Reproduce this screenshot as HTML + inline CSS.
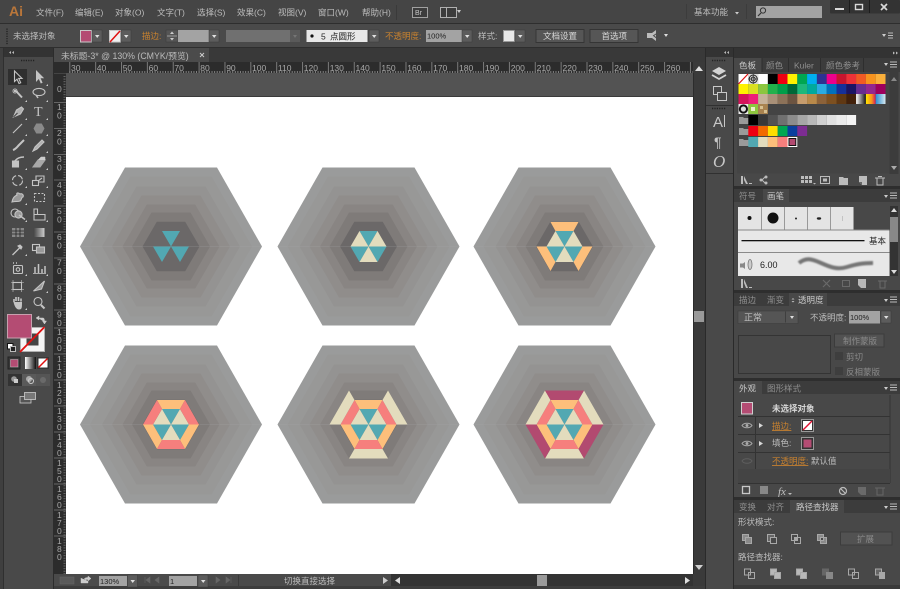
<!DOCTYPE html>
<html><head><meta charset="utf-8"><title>Ai</title>
<style>
html,body{margin:0;padding:0;background:#3a3a3a;width:900px;height:589px;overflow:hidden}
svg{display:block;filter:blur(.35px)}
text{font-family:"Liberation Sans","Noto Sans CJK SC",sans-serif;font-size:8.5px;fill:#bdbdbd}
.o{fill:#c9822f}.d{fill:#8a8a8a}.w{fill:#d8d8d8}.t{fill:#8f8f8f}.r{font-size:8.5px;fill:#a8a8a8}
</style></head><body>
<svg width="900" height="589" viewBox="0 0 900 589" xmlns="http://www.w3.org/2000/svg">
<defs>
<g id="dd"><rect width="10" height="12" fill="#5c5c5c" stroke="#3a3a3a" stroke-width=".5"/><polygon points="3,5 7.5,5 5.2,8" fill="#e0e0e0"/></g>
<g id="bg">
<polygon fill="#9a9b9b" points="-91,0 -46,-79 46,-79 91,0 46,79 -46,79"/>
<polygon fill="#989897" points="-81,0 -40.5,-70 40.5,-70 81,0 40.5,70 -40.5,70"/>
<polygon fill="#949392" points="-69,0 -34.5,-60 34.5,-60 69,0 34.5,60 -34.5,60"/>
<polygon fill="#908d8b" points="-59,0 -29.5,-51 29.5,-51 59,0 29.5,51 -29.5,51"/>
<polygon fill="#898583" points="-48.5,0 -24.2,-42 24.2,-42 48.5,0 24.2,42 -24.2,42"/>
<polygon fill="#7f7b79" points="-39,0 -19.5,-34 19.5,-34 39,0 19.5,34 -19.5,34"/>
<polygon fill="#6b6868" points="-28.5,0 -14.2,-24.7 14.2,-24.7 28.5,0 14.2,24.7 -14.2,24.7"/>
<line x1="-91" x2="91" y1="0" y2="0" stroke="#a9a9a9" stroke-width=".6" opacity=".4"/>
</g>
<g id="teal" fill="#52a8b2"><polygon points="-9,-15.5 9,-15.5 0,0"/><polygon points="-18,0 0,0 -9,15.5"/><polygon points="0,0 18,0 9,15.5"/></g>
<g id="cream" fill="#e3dcbd"><polygon points="-9,-15.5 0,0 -18,0"/><polygon points="9,-15.5 18,0 0,0"/><polygon points="-9,15.5 0,0 9,15.5"/></g>
<g id="orange" fill="#fdbf7b"><polygon points="-14,-24.5 14,-24.5 9,-15.5 -9,-15.5"/><polygon points="-28,0 -18,0 -9,15.5 -14,24.5"/><polygon points="28,0 18,0 9,15.5 14,24.5"/></g>
<g id="pink" fill="#f67f7d"><polygon points="-14,-24.5 -9,-15.5 -18,0 -28,0"/><polygon points="14,-24.5 9,-15.5 18,0 28,0"/><polygon points="-9,15.5 9,15.5 14,24.5 -14,24.5"/></g>
<g id="cream3" fill="#e3dcbd"><polygon points="-19.5,-34 -14,-24.5 -28,0 -39,0"/><polygon points="19.5,-34 14,-24.5 28,0 39,0"/><polygon points="-14,24.5 14,24.5 19.5,34 -19.5,34"/></g>
<g id="mag" fill="#b24a70"><polygon points="-19.5,-34 19.5,-34 14,-24.5 -14,-24.5"/><polygon points="-39,0 -28,0 -14,24.5 -19.5,34"/><polygon points="39,0 28,0 14,24.5 19.5,34"/></g>
<g id="folder"><path d="M0 1h4l1 1h5v6H0z" fill="#9a9a9a"/></g>
<linearGradient id="gg"><stop offset="0" stop-color="#fff"/><stop offset="1" stop-color="#111"/></linearGradient>
<linearGradient id="gy"><stop offset="0" stop-color="#ffe600"/><stop offset=".6" stop-color="#f7931e"/><stop offset="1" stop-color="#d4145a"/></linearGradient>
<linearGradient id="gb"><stop offset="0" stop-color="#2a8fd0"/><stop offset="1" stop-color="#d8e8f0"/></linearGradient>
<linearGradient id="gt" x1="0" x2="1"><stop offset="0" stop-color="#444"/><stop offset="1" stop-color="#ccc"/></linearGradient>
</defs>

<!-- base -->
<rect width="900" height="589" fill="#3d3d3d"/>
<!-- menu -->
<rect width="900" height="23" fill="#454545"/>
<rect y="23" width="900" height="1" fill="#2e2e2e"/>
<rect y="24" width="900" height="23" fill="#4a4a4a"/>
<rect y="47" width="900" height="1" fill="#2e2e2e"/>
<text x="9" y="16" style="font-size:14px;font-weight:bold;fill:#b9763a">Ai</text>
<text x="36" y="15.5">文件(F)</text><text x="75" y="15.5">编辑(E)</text><text x="115" y="15.5">对象(O)</text><text x="157" y="15.5">文字(T)</text><text x="197" y="15.5">选择(S)</text><text x="237" y="15.5">效果(C)</text><text x="278" y="15.5">视图(V)</text><text x="318" y="15.5">窗口(W)</text><text x="362" y="15.5">帮助(H)</text>
<rect x="396" y="5" width="1" height="15" fill="#3a3a3a"/>
<rect x="412.5" y="7.5" width="15" height="10" fill="#3c3c3c" stroke="#a0a0a0"/><text x="415" y="15" style="font-size:7px;fill:#c8c8c8">Br</text>
<rect x="440.5" y="7.5" width="16" height="10" fill="#3c3c3c" stroke="#b0b0b0"/><rect x="446" y="8" width="1" height="9" fill="#b0b0b0"/><polygon points="455,10 459,10 457,13" fill="#ccc" transform="translate(2,0)"/>
<text x="694" y="15">基本功能</text><polygon points="735,12 739,12 737,14.5" fill="#ccc"/>
<rect x="686" y="4" width="1" height="15" fill="#3c3c3c"/><rect x="746" y="4" width="1" height="15" fill="#3c3c3c"/>
<rect x="756" y="6" width="66" height="12" fill="#a3a3a3"/>
<circle cx="763" cy="10.5" r="2.6" fill="none" stroke="#333" stroke-width="1"/><line x1="761" y1="13" x2="758" y2="16" stroke="#333" stroke-width="1.2"/>
<rect x="830" y="0" width="70" height="13.5" fill="#333" rx="1"/>
<rect x="849" y="0" width="1" height="13" fill="#1c1c1c"/><rect x="869" y="0" width="1" height="13" fill="#1c1c1c"/>
<rect x="835" y="8" width="9" height="2" fill="#d8d8d8"/>
<rect x="855.5" y="4.5" width="7" height="5" fill="none" stroke="#d8d8d8" stroke-width="1.4"/>
<path d="M881 4l6 6M887 4l-6 6" stroke="#d8d8d8" stroke-width="1.7"/>

<!-- control bar -->
<path d="M7 28.5v16" stroke="#222" stroke-width="1.4" stroke-dasharray="1.2 1.2"/>
<text x="13" y="39">未选择对象</text>
<rect x="80.5" y="30.5" width="11" height="11.5" fill="#b44c73" stroke="#c9c9c9"/><use href="#dd" x="92" y="30"/>
<rect x="109.5" y="30.5" width="11" height="11.5" fill="#f0f0f0" stroke="#c9c9c9"/><line x1="110" y1="42" x2="120" y2="31" stroke="#e01010" stroke-width="1.5"/><use href="#dd" x="121" y="30"/>
<text x="142" y="39" class="o">描边:</text>
<rect x="166" y="30" width="12" height="12" fill="#555" stroke="#3a3a3a" stroke-width=".5"/><polygon points="170,34 174,34 172,31.5" fill="#ccc"/><polygon points="170,38 174,38 172,40.5" fill="#ccc"/><rect x="167" y="35.5" width="10" height="1" fill="#9a9a9a"/>
<rect x="178" y="30" width="31" height="12" fill="#a3a3a3"/><use href="#dd" x="209" y="30" />
<rect x="226" y="30" width="64" height="12" fill="#707070"/><rect x="290" y="30" width="10" height="12" fill="#5a5a5a"/><polygon points="293,35 297,35 295,38" fill="#757575"/>
<rect x="306.5" y="30" width="61" height="12" fill="#e8e8e8"/><circle cx="312" cy="36" r="1.6" fill="#111"/><text x="321" y="39.5" style="fill:#222">5</text><text x="330" y="39.5" style="fill:#222">点圆形</text><use href="#dd" x="369" y="30"/>
<text x="385" y="39" class="o">不透明度:</text>
<rect x="426" y="30" width="36" height="12" fill="#a3a3a3"/><text x="427" y="38.5" style="font-size:7.5px;fill:#222">100%</text><use href="#dd" x="462" y="30"/>
<text x="478" y="39">样式:</text>
<rect x="503.5" y="30.5" width="11" height="11" fill="#e8e8e8" stroke="#9a9a9a"/><use href="#dd" x="515" y="30"/>
<rect x="536" y="29.5" width="48" height="13" fill="#565656" stroke="#353535"/><text x="543" y="39" class="w">文档设置</text>
<rect x="590" y="29.5" width="48" height="13" fill="#565656" stroke="#353535"/><text x="601.500" y="39" class="w">首选项</text>
<path d="M647 33h5l4-3v11l-4-3h-5z" fill="#bbb"/><path d="M653 36l6-4M654 36l5 4" stroke="#4a4a4a" stroke-width="1"/><polygon points="664,34 668,34 666,37" fill="#ddd"/>
<polygon points="882,34 886,34 884,37" fill="#ccc"/><path d="M888 33h5M888 35.5h5M888 38h5" stroke="#bbb"/>

<!-- doc tab row -->
<rect x="54" y="48" width="652" height="14" fill="#393939"/>
<rect x="54" y="48" width="155" height="14" fill="#4b4b4b"/>
<text x="61" y="59" style="font-size:8.8px;fill:#bbb">未标题-3* @ 130% (CMYK/预览)</text>
<path d="M200 53l4 4M204 53l-4 4" stroke="#ccc" stroke-width="1"/>

<!-- pasteboard + canvas -->
<rect x="66" y="73" width="627" height="24" fill="#535353"/>
<rect x="66" y="97" width="627" height="477" fill="#fff"/>
<rect x="66" y="96" width="627" height="1" fill="#3a3a3a"/>

<!-- rulers -->
<rect x="54" y="62" width="639" height="11" fill="#2c2c2c"/>
<rect x="54" y="62" width="12" height="524" fill="#2c2c2c"/>
<line x1="69.3" x2="693" y1="67.5" y2="67.5" stroke="#7a7a7a" stroke-width="11" stroke-dasharray="1 24.86"/>
<line x1="69.3" x2="693" y1="72" y2="72" stroke="#808080" stroke-width="2" stroke-dasharray="1 1.586"/>
<g>
<text class="r" x="71" y="71">30</text><text class="r" x="96.8" y="71">40</text><text class="r" x="122.7" y="71">50</text><text class="r" x="148.6" y="71">60</text><text class="r" x="174.4" y="71">70</text><text class="r" x="200.3" y="71">80</text><text class="r" x="226.2" y="71">90</text><text class="r" x="252" y="71">100</text><text class="r" x="277.9" y="71">110</text><text class="r" x="303.8" y="71">120</text><text class="r" x="329.7" y="71">130</text><text class="r" x="355.5" y="71">140</text><text class="r" x="381.4" y="71">150</text><text class="r" x="407.3" y="71">160</text><text class="r" x="433.1" y="71">170</text><text class="r" x="459" y="71">180</text><text class="r" x="484.9" y="71">190</text><text class="r" x="510.7" y="71">200</text><text class="r" x="536.6" y="71">210</text><text class="r" x="562.5" y="71">220</text><text class="r" x="588.3" y="71">230</text><text class="r" x="614.2" y="71">240</text><text class="r" x="640.1" y="71">250</text><text class="r" x="666" y="71">260</text>
</g>
<path d="M54 102.5h12M54 128.5h12M54 154.5h12M54 180h12M54 206h12M54 232h12M54 258h12M54 284h12M54 310h12M54 328h12M54 354h12M54 380h12M54 406h12M54 432h12M54 458h12M54 484h12M54 510h12M54 536h12" stroke="#666"/>
<line x1="64.5" x2="64.5" y1="76" y2="574" stroke="#666" stroke-width="2" stroke-dasharray="1 1.59"/>
<rect x="54" y="73" width="12" height="1" fill="#444"/>
<text class="r" x="57" y="92">0</text>
<text class="r"><tspan x="57" y="110">1</tspan><tspan x="57" y="118.5">0</tspan></text>
<text class="r"><tspan x="57" y="136">2</tspan><tspan x="57" y="144.5">0</tspan></text>
<text class="r"><tspan x="57" y="162">3</tspan><tspan x="57" y="170.5">0</tspan></text>
<text class="r"><tspan x="57" y="188">4</tspan><tspan x="57" y="196.5">0</tspan></text>
<text class="r"><tspan x="57" y="214">5</tspan><tspan x="57" y="222.5">0</tspan></text>
<text class="r"><tspan x="57" y="240">6</tspan><tspan x="57" y="248.5">0</tspan></text>
<text class="r"><tspan x="57" y="265.5">7</tspan><tspan x="57" y="274">0</tspan></text>
<text class="r"><tspan x="57" y="291.5">8</tspan><tspan x="57" y="300">0</tspan></text>
<text class="r"><tspan x="57" y="317.5">9</tspan><tspan x="57" y="326">0</tspan></text>
<text class="r"><tspan x="57" y="335">1</tspan><tspan x="57" y="343">0</tspan><tspan x="57" y="351">0</tspan></text>
<text class="r"><tspan x="57" y="362">1</tspan><tspan x="57" y="370">1</tspan><tspan x="57" y="378">0</tspan></text>
<text class="r"><tspan x="57" y="388">1</tspan><tspan x="57" y="396">2</tspan><tspan x="57" y="404">0</tspan></text>
<text class="r"><tspan x="57" y="414">1</tspan><tspan x="57" y="422">3</tspan><tspan x="57" y="430">0</tspan></text>
<text class="r"><tspan x="57" y="440">1</tspan><tspan x="57" y="448">4</tspan><tspan x="57" y="456">0</tspan></text>
<text class="r"><tspan x="57" y="466">1</tspan><tspan x="57" y="474">5</tspan><tspan x="57" y="482">0</tspan></text>
<text class="r"><tspan x="57" y="492">1</tspan><tspan x="57" y="500">6</tspan><tspan x="57" y="508">0</tspan></text>
<text class="r"><tspan x="57" y="518">1</tspan><tspan x="57" y="526">7</tspan><tspan x="57" y="534">0</tspan></text>
<text class="r"><tspan x="57" y="544">1</tspan><tspan x="57" y="552">8</tspan><tspan x="57" y="560">0</tspan></text>

<!-- artwork -->
<g transform="translate(171,246.5)"><use href="#bg"/><use href="#teal"/></g>
<g transform="translate(368.5,246.5)"><use href="#bg"/><use href="#teal"/><use href="#cream"/></g>
<g transform="translate(564.5,246.5)"><use href="#bg"/><use href="#teal"/><use href="#cream"/><use href="#orange"/></g>
<g transform="translate(171,424.5)"><use href="#bg"/><use href="#teal"/><use href="#cream"/><use href="#orange"/><use href="#pink"/></g>
<g transform="translate(368.5,424.5)"><use href="#bg"/><use href="#teal"/><use href="#cream"/><use href="#orange"/><use href="#pink"/><use href="#cream3"/></g>
<g transform="translate(564.5,424.5)"><use href="#bg"/><use href="#teal"/><use href="#cream"/><use href="#orange"/><use href="#pink"/><use href="#cream3"/><use href="#mag"/></g>

<!-- canvas right scrollbar -->
<rect x="693" y="62" width="12" height="524" fill="#3a3a3a"/>
<polygon points="695,71 703,71 699,66" fill="#e0e0e0"/>
<rect x="694" y="311" width="10" height="11" fill="#9a9a9a"/>
<polygon points="695,565 703,565 699,570" fill="#d0d0d0"/>
<rect x="693" y="73" width="1" height="501" fill="#2c2c2c"/>

<!-- status bar -->
<rect x="54" y="574" width="337" height="12" fill="#4a4a4a"/>
<rect x="391" y="574" width="302" height="12" fill="#333"/>
<rect x="54" y="586" width="652" height="3" fill="#3d3d3d"/>
<rect x="60" y="577" width="14" height="7" fill="#5a5a5a" stroke="#666" stroke-width=".5"/>
<path d="M81 578v5h7v-2M84 580c0-2 2-2.5 4-2.5v-1.5l3 2.5-3 2.5v-1.5c-2 0-3 0-4 1z" fill="#ccc" stroke="#ccc" stroke-width=".4"/>
<rect x="99" y="576" width="28" height="10" fill="#a3a3a3"/><text x="100" y="584" style="font-size:7.5px;fill:#222">130%</text><use href="#dd" x="127.5" y="575"/>
<path d="M145 577v6M150 577l-4 3 4 3zM159 577l-4 3 4 3z" fill="#666" stroke="#666" stroke-width=".6"/>
<rect x="169" y="576" width="28" height="10" fill="#a3a3a3"/><text x="170" y="584" style="font-size:7.5px;fill:#222">1</text><use href="#dd" x="198" y="575"/>
<path d="M216 577l4 3-4 3zM226 577l4 3-4 3zM231 577v6" fill="#666" stroke="#666" stroke-width=".6"/>
<rect x="238" y="575" width="1" height="11" fill="#3a3a3a"/>
<text x="284" y="584">切换直接选择</text>
<polygon points="383,577 383,584 388,580.5" fill="#ccc"/>
<polygon points="400,577 400,584 395,580.5" fill="#ddd"/>
<rect x="537" y="575" width="10" height="11" fill="#9a9a9a"/>
<polygon points="685,577 685,584 690,580.5" fill="#ddd"/>

<!-- left toolbar -->
<rect x="0" y="48" width="54" height="541" fill="#494949"/>
<rect x="0" y="48" width="3" height="541" fill="#3f3f3f"/>
<rect x="3" y="48" width="1" height="541" fill="#2f2f2f"/>
<rect x="4" y="48" width="50" height="9" fill="#333"/>
<rect x="53" y="48" width="1" height="541" fill="#2c2c2c"/>
<path d="M9 52.5l2-1.5v3zM12 52.5l2-1.5v3z" fill="#bbb"/>
<path d="M21 60.5h14" stroke="#222" stroke-width="1.4" stroke-dasharray="1.2 1.2"/>
<rect x="8" y="69" width="19" height="16" fill="#2f2f2f"/>
<!-- tools -->
<g fill="none" stroke="#c4c4c4" stroke-width="1.1">
<path d="M14.5 71v10.5l2.5-2.3 2 4.3 1.700-.8-2-4.300h3.300z"/>
<path d="M15.500 90.500l6.500 7" stroke-width="2"/>
<path d="M12 91h6M15 88v6M13 89l4 4M17 89l-4 4" stroke-width=".8"/>
<ellipse cx="39" cy="92" rx="6" ry="3.600"/><path d="M36 95l2 3" stroke-width="1.500"/>
<path d="M13.500 117l3-7 5-3 2 2-3 5z" fill="#b0b0b0"/><path d="M13.500 117l4-4" stroke="#444"/>
<path d="M13 133l9-9"/>
<path d="M13 150c3-1 4-3 6-5l5-5" stroke-width="2"/>
<path d="M33 151l2-4 7-7 2 2-7 7z" fill="#b0b0b0"/>
<path d="M12.500 161h6v6h-6z" fill="#c4c4c4"/><path d="M15 161c2-3 5-4 9-4" stroke-width="1.600"/>
<path d="M33 167l5-7h7l-5 7z" fill="#a8a8a8" stroke="#a8a8a8"/><path d="M38 160l3-3h4v3" fill="#ccc" stroke="#ccc" stroke-width=".5"/>
<circle cx="17.500" cy="180.500" r="5" stroke-dasharray="6 2"/>
<rect x="32.500" y="180.500" width="6" height="5"/><path d="M36 180v-4h8v6h-5M38 181l4-3"/>
<path d="M12 202c1-5 3-6 5-7-1-2 1-3 3-1 2-1 4 1 3 3-2 0-1 3-3 4-2 1-4 0-8 1z" fill="#999"/>
<rect x="34.500" y="193.500" width="10" height="8" stroke-dasharray="2 1.500"/>
<circle cx="15" cy="213" r="4" /><circle cx="18.500" cy="214.500" r="3.600" fill="#999"/><path d="M19 215l6 4.500" stroke-width="1.500"/>
<path d="M34 220v-11h3.500v5.500h7.500v5.500zM34 214.500h11"/>
</g>
<text x="34" y="116" style="font-family:'Liberation Serif',serif;font-size:14px;fill:#c4c4c4">T</text>
<polygon points="44.500,128.500 41.750,133.500 36.250,133.500 33.500,128.500 36.250,123.500 41.750,123.500" fill="#8a8a8a"/>
<path d="M36 70v12l2.800-3 2 4.500 1.800-.8-2-4.500h3.600z" fill="#c4c4c4"/>
<rect x="12" y="228" width="12" height="9" fill="#888"/><path d="M12 231h12M12 234h12M16 228v9M20 228v9" stroke="#222" stroke-width=".8"/>
<rect x="33.500" y="228" width="11" height="9" fill="url(#gt)"/>
<!-- second half tools -->
<g fill="none" stroke="#c4c4c4" stroke-width="1.100">
<path d="M12.500 255l7-7" stroke-width="1.300"/><path d="M18 246l2-1 2 2-1 2z" fill="#c4c4c4"/>
<rect x="32.500" y="244.500" width="7" height="6"/><rect x="36.500" y="247" width="8" height="6" fill="#999"/>
<rect x="13.500" y="265.500" width="9" height="8" rx="1"/><circle cx="18" cy="269.500" r="1.800"/><path d="M13 263h1M16 263h1" stroke-width="1.500"/>
<path d="M35 273v-6M38.500 273v-9M42 273v-4M45 273v-7" stroke-width="1.500"/><path d="M33 273.500h13" stroke-width=".8"/>
<rect x="13" y="282.500" width="8.500" height="7"/><path d="M11 282.500h13M11 289.500h13M13 280v12M21.500 280v12" stroke-width=".6"/>
<path d="M33.500 291l11-10-3 8z" fill="#999"/>
<circle cx="38" cy="301.500" r="4"/><path d="M41 305l3.500 3.500" stroke-width="2"/>
</g>
<path d="M14 302v-3M16 301v-4M18.500 301v-4M21 301.500v-3" stroke="#c4c4c4" stroke-width="1.600"/><path d="M13.500 302c1 4 2.500 7.500 5.500 7.500s3-2 3-7.500z" fill="#c4c4c4"/>
<!-- tri markers -->
<path d="M46 86h2v-2zM25 102h2v-2zM46 102h2v-2zM25 120h2v-2zM46 120h2v-2zM25 136h2v-2zM46 136h2v-2zM46 153h2v-2zM25 170h2v-2zM46 170h2v-2zM25 188h2v-2zM46 188h2v-2zM25 205h2v-2zM25 222h2v-2zM46 222h2v-2zM25 256h2v-2zM25 276h2v-2zM46 276h2v-2zM46 293h2v-2zM25 310h2v-2z" fill="#ccc"/>
<!-- fill/stroke -->
<rect x="20.5" y="327.5" width="24" height="24" fill="#f4f4f4" stroke="#b0b0b0"/>
<rect x="26.5" y="333.5" width="12" height="12" fill="#444"/>
<line x1="20" y1="352" x2="44.500" y2="327" stroke="#e01010" stroke-width="1.800"/>
<rect x="7.500" y="314.500" width="24" height="23.500" fill="#b44c73" stroke="#c7a0ae"/>
<path d="M38 318h5c1 0 1.500 1 1.500 4M36 318l3-2v4zM44.500 324l-2-3h4z" fill="#ccc" stroke="#ccc" stroke-width=".5"/>
<rect x="7.500" y="343.500" width="5.500" height="5.500" fill="#fff" stroke="#111"/><rect x="10.500" y="346.500" width="5" height="5" fill="#222" stroke="#bbb"/>
<rect x="8" y="357" width="12" height="12" fill="#383838" stroke="#222"/><rect x="10.500" y="359.500" width="7.500" height="7.500" fill="#b44c73" stroke="#ddd" stroke-width=".4"/>
<rect x="25" y="357" width="11" height="12" fill="url(#gg)"/>
<rect x="37" y="357" width="12" height="12" fill="#383838"/><rect x="38.500" y="358.500" width="9" height="9" fill="#fff"/><line x1="38.500" y1="367.500" x2="47.500" y2="358.500" stroke="#e01010" stroke-width="1.500"/>
<rect x="8" y="374" width="14" height="12" fill="#333"/><rect x="22" y="374" width="14" height="12" fill="#5a5a5a"/><rect x="36" y="374" width="14" height="12" fill="#555"/>
<circle cx="14" cy="379" r="2.800" fill="#999"/><rect x="14" y="379" width="4" height="4" fill="#ccc"/>
<circle cx="29" cy="379" r="3" fill="#aaa"/><circle cx="31" cy="381" r="2.500" fill="none" stroke="#ccc"/>
<circle cx="43" cy="380" r="3" fill="#6a6a6a"/>
<rect x="20" y="396.500" width="11" height="6.500" fill="#555" stroke="#ccc" stroke-width=".8"/><rect x="24.500" y="392.500" width="11" height="7" fill="#777" stroke="#ccc" stroke-width=".8"/>

<!-- right icon strip -->
<rect x="705" y="48" width="29" height="541" fill="#494949"/>
<rect x="705" y="48" width="1" height="541" fill="#2a2a2a"/>
<rect x="733" y="48" width="1" height="541" fill="#2a2a2a"/>
<rect x="706" y="48" width="27" height="9" fill="#333"/>
<path d="M724 52.5l2-1.5v3zM727 52.5l2-1.5v3z" fill="#bbb"/>
<path d="M712 60.5h14" stroke="#222" stroke-width="1.4" stroke-dasharray="1.2 1.2"/>
<path d="M719 67l7 4-7 4-7-4z" fill="#d4d4d4"/><path d="M712 75l7 4 7-4" fill="none" stroke="#d4d4d4" stroke-width="1.8"/>
<rect x="713.5" y="86.5" width="8" height="8" fill="none" stroke="#c8c8c8"/><rect x="717.5" y="92.5" width="9" height="8" fill="#494949" stroke="#c8c8c8"/>
<rect x="706" y="105" width="27" height="1" fill="#303030"/>
<path d="M712 108.5h14" stroke="#222" stroke-width="1.4" stroke-dasharray="1.2 1.2"/>
<text x="713" y="127" style="font-size:15px;fill:#c8c8c8">A</text><rect x="724" y="115" width="1" height="12" fill="#c8c8c8"/>
<text x="714" y="147" style="font-size:14px;fill:#c8c8c8">¶</text>
<text x="713" y="167" style="font-family:'Liberation Serif',serif;font-style:italic;font-size:17px;fill:#c8c8c8">O</text>
<rect x="706" y="173" width="27" height="1" fill="#303030"/>

<!-- right panels -->
<rect x="734" y="48" width="166" height="541" fill="#484848"/>
<rect x="734" y="48" width="166" height="10" fill="#333"/>
<path d="M895 53l-2-1.5v3zM898 53l-2-1.5v3z" fill="#bbb"/>

<!-- swatches -->
<rect x="734" y="58" width="166" height="14" fill="#3c3c3c"/>
<rect x="734" y="58" width="28" height="14" fill="#484848"/>
<text x="739" y="68.5" style="fill:#c8c8c8">色板</text><text x="766" y="68.5" class="t">颜色</text><text x="794" y="68.5" class="t">Kuler</text><text x="826" y="68.5" class="t">颜色参考</text>
<rect x="761.5" y="58" width="1" height="14" fill="#2e2e2e"/><rect x="788" y="58" width="1" height="14" fill="#2e2e2e"/><rect x="820" y="58" width="1" height="14" fill="#2e2e2e"/><rect x="863" y="58" width="1" height="14" fill="#2e2e2e"/>
<polygon points="884,63 888,63 886,66" fill="#ccc"/><path d="M890 62h7M890 64.5h7M890 67h7" stroke="#bbb"/>
<rect x="737" y="72.5" width="152.5" height="101" fill="#444"/>
<rect x="889.5" y="72" width="9" height="102" fill="#3c3c3c"/>
<polygon points="891,81 897,81 894,77" fill="#888"/><polygon points="891,166 897,166 894,170" fill="#aaa"/>
<!-- rows -->
<g>
<rect x="738.5" y="74" width="9.8" height="10" fill="#fff"/><line x1="738.5" y1="84" x2="748" y2="74" stroke="#e01010" stroke-width="1.2"/>
<rect x="748.3" y="74" width="9.8" height="10" fill="#ddd"/><circle cx="753.2" cy="79" r="4" fill="none" stroke="#222"/><circle cx="753.2" cy="79" r="2" fill="none" stroke="#222"/><path d="M748 79h10M753.2 74v10" stroke="#222" stroke-width=".6"/>
<rect x="758.1" y="74" width="9.8" height="10" fill="#fff"/>
<rect x="767.9" y="74" width="9.8" height="10" fill="#000"/>
<rect x="777.7" y="74" width="9.8" height="10" fill="#ed0012"/>
<rect x="787.5" y="74" width="9.8" height="10" fill="#fff100"/>
<rect x="797.3" y="74" width="9.8" height="10" fill="#00a651"/>
<rect x="807.1" y="74" width="9.8" height="10" fill="#00aeef"/>
<rect x="816.9" y="74" width="9.8" height="10" fill="#2e3192"/>
<rect x="826.7" y="74" width="9.8" height="10" fill="#ec008c"/>
<rect x="836.5" y="74" width="9.8" height="10" fill="#c8142e"/>
<rect x="846.3" y="74" width="9.8" height="10" fill="#ed3237"/>
<rect x="856.1" y="74" width="9.8" height="10" fill="#f15a24"/>
<rect x="865.9" y="74" width="9.8" height="10" fill="#f7931e"/>
<rect x="875.7" y="74" width="9.8" height="10" fill="#fbb03b"/>

<rect x="738.5" y="84" width="9.8" height="10" fill="#fff200"/>
<rect x="748.3" y="84" width="9.8" height="10" fill="#d9e021"/>
<rect x="758.1" y="84" width="9.8" height="10" fill="#8cc63f"/>
<rect x="767.9" y="84" width="9.8" height="10" fill="#22b14c"/>
<rect x="777.7" y="84" width="9.8" height="10" fill="#009e49"/>
<rect x="787.5" y="84" width="9.8" height="10" fill="#006837"/>
<rect x="797.3" y="84" width="9.8" height="10" fill="#1db87a"/>
<rect x="807.1" y="84" width="9.8" height="10" fill="#00a99d"/>
<rect x="816.9" y="84" width="9.8" height="10" fill="#29abe2"/>
<rect x="826.7" y="84" width="9.8" height="10" fill="#0071bc"/>
<rect x="836.5" y="84" width="9.8" height="10" fill="#15309a"/>
<rect x="846.3" y="84" width="9.8" height="10" fill="#1b1464"/>
<rect x="856.1" y="84" width="9.8" height="10" fill="#662d91"/>
<rect x="865.9" y="84" width="9.8" height="10" fill="#93278f"/>
<rect x="875.7" y="84" width="9.8" height="10" fill="#9e005d"/>

<rect x="738.5" y="94" width="9.8" height="10" fill="#d4145a"/>
<rect x="748.3" y="94" width="9.8" height="10" fill="#ed1e79"/>
<rect x="758.1" y="94" width="9.8" height="10" fill="#c7b299"/>
<rect x="767.9" y="94" width="9.8" height="10" fill="#a89078"/>
<rect x="777.7" y="94" width="9.8" height="10" fill="#8c7259"/>
<rect x="787.5" y="94" width="9.8" height="10" fill="#6c5441"/>
<rect x="797.3" y="94" width="9.8" height="10" fill="#c69c6d"/>
<rect x="807.1" y="94" width="9.8" height="10" fill="#b8894a"/>
<rect x="816.9" y="94" width="9.8" height="10" fill="#8c6239"/>
<rect x="826.7" y="94" width="9.8" height="10" fill="#7d5020"/>
<rect x="836.5" y="94" width="9.8" height="10" fill="#603813"/>
<rect x="846.3" y="94" width="9.8" height="10" fill="#42210b"/>
<rect x="856.1" y="94" width="9.8" height="10" fill="url(#gg)"/>
<rect x="865.9" y="94" width="9.8" height="10" fill="url(#gy)"/>
<rect x="875.7" y="94" width="9.8" height="10" fill="url(#gb)"/>

<rect x="738.5" y="104" width="9.8" height="10" fill="#eee"/><circle cx="743.4" cy="109" r="4.6" fill="#111"/><circle cx="743.4" cy="109" r="2.6" fill="#ddd"/>
<rect x="748.3" y="104" width="9.8" height="10" fill="#8dc63f"/><rect x="751" y="107" width="4" height="4" fill="#e8f0c8"/>
<rect x="758.1" y="104" width="9.8" height="10" fill="#a9834f"/><rect x="760" y="106" width="3" height="3" fill="#d8c090"/><rect x="764" y="110" width="3" height="3" fill="#d8c090"/>

<use href="#folder" x="739" y="116"/>
<rect x="748.3" y="115" width="9.8" height="10" fill="#000"/>
<rect x="758.1" y="115" width="9.8" height="10" fill="#383838"/>
<rect x="767.9" y="115" width="9.8" height="10" fill="#525252"/>
<rect x="777.7" y="115" width="9.8" height="10" fill="#707070"/>
<rect x="787.5" y="115" width="9.8" height="10" fill="#8c8c8c"/>
<rect x="797.3" y="115" width="9.8" height="10" fill="#a6a6a6"/>
<rect x="807.1" y="115" width="9.8" height="10" fill="#b8b8b8"/>
<rect x="816.9" y="115" width="9.8" height="10" fill="#d0d0d0"/>
<rect x="826.7" y="115" width="9.8" height="10" fill="#e0e0e0"/>
<rect x="836.5" y="115" width="9.8" height="10" fill="#ebebeb"/>
<rect x="846.3" y="115" width="9.8" height="10" fill="#f4f4f4"/>

<use href="#folder" x="739" y="127"/>
<rect x="748.3" y="126" width="9.8" height="10" fill="#ed0012"/>
<rect x="758.1" y="126" width="9.8" height="10" fill="#f26a00"/>
<rect x="767.9" y="126" width="9.8" height="10" fill="#ffdd00"/>
<rect x="777.7" y="126" width="9.8" height="10" fill="#00a651"/>
<rect x="787.5" y="126" width="9.8" height="10" fill="#0a3f9e"/>
<rect x="797.3" y="126" width="9.8" height="10" fill="#7d2c92"/>

<use href="#folder" x="739" y="138"/>
<rect x="748.3" y="137" width="9.8" height="10" fill="#52a8b2"/>
<rect x="758.1" y="137" width="9.8" height="10" fill="#e3dcbd"/>
<rect x="767.9" y="137" width="9.8" height="10" fill="#fdbf7b"/>
<rect x="777.7" y="137" width="9.8" height="10" fill="#f67f7d"/>
<rect x="787.5" y="137" width="9.8" height="10" fill="#ffffff"/><rect x="788.5" y="138" width="7.8" height="8" fill="#111"/><rect x="789.5" y="139" width="5.8" height="6" fill="#b24a70"/>
</g>
<!-- swatch bottom icons -->
<g fill="#bcbcbc">
<path d="M741 176v8h2v-8zM744 176l4 8h-2l-2-4zM749 183h3v1h-3z"/>
<path d="M762 180l3-3M762 180l3 3" stroke="#bcbcbc" fill="none"/><circle cx="761" cy="180" r="1.5"/><circle cx="766" cy="177" r="1.5"/><circle cx="766" cy="183" r="1.5"/>
<path d="M801 176h3v3h-3zM805 176h3v3h-3zM809 176h3v3h-3zM801 180h3v3h-3zM805 180h3v3h-3zM809 180h3v3h-3z"/><path d="M813 183h3l-1.5 1.500z"/>
<rect x="820.5" y="176.5" width="9" height="7" fill="none" stroke="#bcbcbc"/><rect x="823" y="178.5" width="4" height="3"/>
<path d="M839 177h4l1 1h4v7h-9z"/>
<path d="M859 176h8v9h-5l-3-3z"/><path d="M859 182h3v3z" fill="#666"/>
<path d="M875 178h10M877 178v7h6v-7M878 176.5h4" fill="none" stroke="#bcbcbc"/>
</g>
<rect x="734" y="186" width="166" height="3" fill="#2e2e2e"/>

<!-- brushes -->
<rect x="734" y="189" width="166" height="13" fill="#3c3c3c"/>
<rect x="763" y="189" width="26" height="13" fill="#484848"/>
<text x="739" y="199" class="t">符号</text><text x="767" y="199" style="fill:#c8c8c8">画笔</text>
<polygon points="884,195 888,195 886,198" fill="#ccc"/><path d="M890 193h7M890 195.5h7M890 198h7" stroke="#bbb"/>
<rect x="738" y="207" width="115.500" height="22.5" fill="#e4e4e4"/>
<rect x="738" y="230" width="151.5" height="46" fill="#e8e8e8"/>
<path d="M761.5 207v22.5M784.5 207v22.5M807.5 207v22.5M830.5 207v22.5M853.5 207v22.5" stroke="#999"/>
<rect x="738" y="229.5" width="151.5" height="1" fill="#888"/><rect x="738" y="252" width="151.5" height="1" fill="#8a8a8a"/>
<circle cx="749.5" cy="218" r="2" fill="#111"/><circle cx="773" cy="218" r="5.5" fill="#111"/><circle cx="796" cy="218.5" r="1" fill="#222"/><ellipse cx="819" cy="218.5" rx="2.2" ry="1.2" fill="#222"/><rect x="842" y="216" width=".8" height="5" fill="#bbb"/>
<rect x="741.5" y="240" width="123" height="1.3" fill="#111"/>
<text x="869" y="244" style="fill:#222">基本</text>
<path d="M745 262l-2 1.5h-3v4h3l2 1.500z" fill="#888"/><ellipse cx="750" cy="264.5" rx="2" ry="5" fill="#ccc" stroke="#777" stroke-width=".8"/>
<text x="760" y="268" style="fill:#222;font-size:9px">6.00</text>
<path d="M799 263c7-6 13-4 22 0s16 7 26 4 16-4 26-4" fill="none" stroke="#757575" stroke-width="4" style="filter:blur(.8px)"/>
<rect x="890" y="206" width="8" height="70" fill="#333"/>
<polygon points="891,212 897,212 894,208" fill="#ddd"/><rect x="890" y="217" width="8" height="25" fill="#888"/><polygon points="891,270 897,270 894,274" fill="#ddd"/>
<g fill="#bcbcbc"><path d="M741 279v9h2v-9zM744 279l4 9h-2l-2-5zM749 287h3v1h-3z"/></g>
<path d="M823 280l7 7M830 280l-7 7" stroke="#6a6a6a" stroke-width="1.2"/>
<rect x="842.5" y="280.5" width="7" height="6" fill="none" stroke="#6a6a6a"/>
<path d="M858 279h8v9h-5l-3-3z" fill="#b8b8b8"/><path d="M878 281h9M880 281v7h5v-7" fill="none" stroke="#6a6a6a"/>
<rect x="734" y="290" width="166" height="3" fill="#2e2e2e"/>

<!-- transparency -->
<rect x="734" y="293" width="166" height="13" fill="#3c3c3c"/>
<rect x="789" y="293" width="38" height="13" fill="#484848"/>
<text x="739" y="303" class="t">描边</text><text x="767" y="303" class="t">渐变</text><text x="798" y="303" style="fill:#c8c8c8">透明度</text>
<path d="M793 298l-1.5 1.5h3zM793 302.500l-1.5-1.500h3z" fill="#bbb"/>
<polygon points="884,299 888,299 886,302" fill="#ccc"/><path d="M890 297h7M890 299.5h7M890 302h7" stroke="#bbb"/>
<rect x="738" y="311" width="60" height="12.5" fill="#555" stroke="#3a3a3a" stroke-width=".5"/>
<text x="744" y="320.5" style="font-size:9px">正常</text><rect x="785" y="311.5" width="1" height="11" fill="#3f3f3f"/><polygon points="790,316 794,316 792,319" fill="#ddd"/>
<text x="810" y="320.5">不透明度:</text>
<rect x="849" y="311" width="31" height="12.5" fill="#a3a3a3"/><text x="850" y="320" style="font-size:7.5px;fill:#222">100%</text><use href="#dd" x="881" y="311"/>
<rect x="738.5" y="335.5" width="92" height="38" fill="none" stroke="#343434"/>
<rect x="834.5" y="334" width="49.5" height="13" fill="#525252" stroke="#3c3c3c"/><text x="843" y="344" class="d">制作蒙版</text>
<rect x="835" y="352" width="8" height="8" fill="#3e3e3e"/><text x="846" y="360" class="d">剪切</text>
<rect x="835" y="367" width="8" height="8" fill="#3e3e3e"/><text x="846" y="375" class="d">反相蒙版</text>
<rect x="734" y="378" width="166" height="3" fill="#2e2e2e"/>

<!-- appearance -->
<rect x="734" y="381" width="166" height="13" fill="#3c3c3c"/>
<rect x="734" y="381" width="28" height="13" fill="#484848"/>
<text x="739" y="391.5" style="fill:#c8c8c8">外观</text><text x="767" y="391.5" class="t">图形样式</text>
<polygon points="884,387 888,387 886,390" fill="#ccc"/><path d="M890 385h7M890 387.5h7M890 390h7" stroke="#bbb"/>
<rect x="741.5" y="402.5" width="11" height="11.5" fill="#b44c73" stroke="#d0d0d0"/>
<text x="772" y="411.500" class="w" style="font-weight:bold">未选择对象</text>
<path d="M738 416.500h152M738 434.500h152M738 452.500h152M738 469.500h152M755.500 417v52" stroke="#333"/>
<rect x="889.5" y="395" width="1" height="88" fill="#333"/>
<rect x="738" y="469" width="152" height="14" fill="#444"/>
<rect x="738" y="483" width="152" height="1" fill="#333"/>
<path d="M742 425.500c2-3 8-3 10 0-2 3-8 3-10 0z" fill="none" stroke="#aaa"/><circle cx="747" cy="425.500" r="1.500" fill="#aaa"/>
<path d="M742 443.500c2-3 8-3 10 0-2 3-8 3-10 0z" fill="none" stroke="#aaa"/><circle cx="747" cy="443.500" r="1.500" fill="#aaa"/>
<path d="M742 461c2-3 8-3 10 0-2 3-8 3-10 0z" fill="none" stroke="#5e5e5e"/>
<polygon points="759,423 759,428 763,425.500" fill="#d8d8d8"/><polygon points="759,441 759,446 763,443.500" fill="#d8d8d8"/>
<text x="772" y="429" class="o" style="text-decoration:underline">描边:</text>
<rect x="801.5" y="419.500" width="12" height="12" fill="#333" stroke="#999"/><rect x="803" y="421" width="9" height="9" fill="#fff"/><line x1="803" y1="430" x2="812" y2="421" stroke="#e01030" stroke-width="1.4"/>
<text x="772" y="446">填色:</text>
<rect x="801.5" y="437.500" width="12" height="12" fill="#333" stroke="#999"/><rect x="803.500" y="439.500" width="8" height="8" fill="#b44c73"/>
<text x="772" y="464" class="o" style="text-decoration:underline">不透明度:</text><text x="811" y="464">默认值</text>
<rect x="742.5" y="486.5" width="7" height="7" fill="none" stroke="#c8c8c8" stroke-width="1.3"/>
<rect x="760.5" y="486.5" width="7" height="7" fill="#888" stroke="#888"/>
<text x="778" y="495" style="font-family:'Liberation Serif',serif;font-style:italic;font-size:11px;fill:#c0c0c0">fx</text><polygon points="788,493 792,493 790,495" fill="#bbb"/>
<circle cx="843" cy="491" r="3.5" fill="none" stroke="#bbb" stroke-width="1.2"/><line x1="840.5" y1="488.5" x2="845.5" y2="493.5" stroke="#bbb" stroke-width="1.2"/>
<path d="M858 487h8v8h-5l-3-3z" fill="#6a6a6a"/><path d="M875 488h10M877 488v7h6v-7" fill="none" stroke="#666"/>
<rect x="734" y="497" width="166" height="3" fill="#2e2e2e"/>

<!-- pathfinder -->
<rect x="734" y="500" width="166" height="13" fill="#3c3c3c"/>
<rect x="790" y="500" width="54" height="13" fill="#484848"/>
<text x="739" y="510" class="t">变换</text><text x="767" y="510" class="t">对齐</text><text x="796" y="510" style="fill:#c8c8c8">路径查找器</text>
<polygon points="884,506 888,506 886,509" fill="#ccc"/><path d="M890 504h7M890 506.5h7M890 509h7" stroke="#bbb"/>
<text x="738" y="525">形状模式:</text>
<g stroke="#a8a8a8" fill="none">
<rect x="742.5" y="534.5" width="6" height="6" fill="#8a8a8a"/><rect x="745.5" y="537.5" width="6" height="6" fill="#8a8a8a"/>
<rect x="767.5" y="534.5" width="7" height="7" fill="#666"/><rect x="770.5" y="537.5" width="6" height="6" fill="#484848"/>
<rect x="791.5" y="534.5" width="6" height="6"/><rect x="794.5" y="537.5" width="6" height="6"/><rect x="794.5" y="537.5" width="3" height="3" fill="#a8a8a8"/>
<rect x="817.5" y="534.5" width="6" height="6" fill="#8a8a8a"/><rect x="820.5" y="537.5" width="6" height="6" fill="#8a8a8a"/><rect x="820.5" y="537.5" width="3" height="3" fill="#484848"/>
</g>
<rect x="840.5" y="532" width="51.5" height="13" fill="#525252" stroke="#3c3c3c"/><text x="857" y="542" class="d">扩展</text>
<text x="738" y="560">路径查找器:</text>
<g stroke="#a8a8a8" fill="none">
<rect x="744.5" y="569" width="6" height="6"/><rect x="748.5" y="572.5" width="6" height="6"/>
<rect x="770.5" y="569" width="6" height="6" fill="#b8b8b8"/><rect x="774.5" y="572.5" width="6" height="6" fill="#b8b8b8"/>
<rect x="796.5" y="569" width="6" height="6" fill="#b8b8b8"/><rect x="800.5" y="572.5" width="6" height="6" fill="#b8b8b8"/>
<rect x="822.5" y="569" width="6" height="6" fill="#666" stroke="#666"/><rect x="826.5" y="572.5" width="6" height="6" fill="#888" stroke="#888"/>
<rect x="848.5" y="569" width="6" height="6"/><rect x="852.5" y="572.5" width="6" height="6"/>
<rect x="875.5" y="569" width="6" height="6" fill="#666"/><rect x="879.5" y="572.5" width="5" height="6" fill="#a8a8a8"/>
</g>
<rect x="734" y="585" width="166" height="4" fill="#3a3a3a"/>
</svg>
</body></html>
